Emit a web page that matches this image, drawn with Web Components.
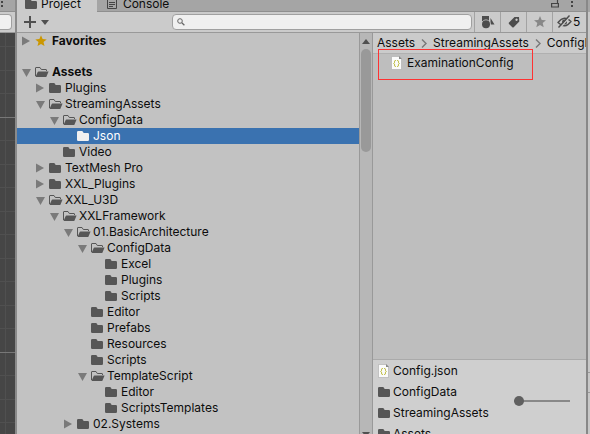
<!DOCTYPE html>
<html lang="en">
<head>
<meta charset="utf-8">
<title>Project</title>
<style>
html,body{margin:0;height:100%;overflow:hidden}
body{font:12px/16px Inter,"Liberation Sans",sans-serif;color:#0d0d0d;background:#c2c2c2}
</style>
</head>
<body>
<editor-window></editor-window>
<script>
const ICONS = {
  folder: '<svg width="14" height="14" viewBox="0 0 14 14"><path fill="#565656" d="M0 3.2Q0 2 1.2 2h3.6Q5.6 2 6 2.8L6.6 4h4.2Q12 4 12 5.2v5.6q0 1.2-1.2 1.2H1.2Q0 12 0 10.8z"/></svg>',
  selected: '<svg width="14" height="14" viewBox="0 0 14 14"><path fill="#f0f0f0" d="M0 3.2Q0 2 1.2 2h3.6Q5.6 2 6 2.8L6.6 4h4.2Q12 4 12 5.2v5.6q0 1.2-1.2 1.2H1.2Q0 12 0 10.8z"/></svg>',
  open: '<svg width="14" height="14" viewBox="0 0 14 14"><path fill="none" stroke="#565656" d="M.5 11V3q0-.5.5-.5h4L6.300 4.500H11q.5 0 .5.5v1"/><path fill="#565656" d="M3.500 6.500H13.600L11.500 11.500q-.2.500-.8.500H.5L2.700 7q.2-.5.8-.5z"/></svg>',
  star: '<svg width="14" height="14" viewBox="0 0 14 14"><path fill="#cb9700" d="M6 1.300l1.600 3.800 4.100.3-3.200 2.700 1 4L6 9.900l-3.500 2.200 1-4L.3 5.400l4.100-.3z"/></svg>',
  greystar: '<svg width="14" height="14" viewBox="0 0 14 14"><path fill="#888" d="M7 1l1.700 4 4.300.3-3.300 2.800 1 4.200L7 10l-3.700 2.300 1-4.200L1 5.300 5.300 5z"/></svg>',
  json: '<svg width="14" height="14" viewBox="0 0 14 14"><path fill="#fbfbfb" stroke="#aaa" stroke-width=".6" d="M.5.500h7.800l2.200 2.200v10.800H.5z"/><path fill="#888" d="M8 0v3h3z"/><path fill="none" stroke="#b5b424" d="M4.800 4.500q-1.300 0-1.300 1v1L2.800 7.500l.7.800v1q0 1.200 1.300 1.200M6.200 4.500q1.300 0 1.300 1v1l.7 1-.7.800v1q0 1.200-1.300 1.200"/></svg>',
  list: '<svg width="11" height="12" viewBox="0 0 11 12"><path fill="none" stroke="#444" d="M.5 1.500h9v9h-9zM2 4.500h6M2 6.500h6M2 8.500h4"/></svg>',
  plus: '<svg width="12" height="12" viewBox="0 0 12 12"><path stroke="#505050" stroke-width="2" d="M6 0v12M0 6h12"/></svg>',
  caret: '<svg width="8" height="5" viewBox="0 0 8 5"><path fill="#505050" d="M0 0h8L4 5z"/></svg>',
  up: '<svg width="8" height="5" viewBox="0 0 8 5"><path fill="#505050" d="M0 5h8L4 0z"/></svg>',
  right: '<svg width="8" height="10" viewBox="0 0 8 10"><path fill="#7a7a7a" d="M0 .500v9L8 5z"/></svg>',
  down: '<svg width="9" height="9" viewBox="0 0 9 9"><path fill="#7a7a7a" d="M0 1h9L4.500 9z"/></svg>',
  search: '<svg width="8" height="8" viewBox="0 0 8 8"><circle cx="3" cy="3" r="2.300" fill="none" stroke="#666"/><path stroke="#666" stroke-width="1.300" d="M4.800 4.800l2.600 2.400"/></svg>',
  shapes: '<svg width="14" height="14" viewBox="0 0 14 14"><path fill="#4d4d4d" d="M1 1h7v5H1zM9.500 3l4 6.500h-4z"/><circle cx="5" cy="9.200" r="4.600" fill="#cbcbcb"/><circle cx="5" cy="9.200" r="4" fill="#4d4d4d"/></svg>',
  tag: '<svg width="14" height="14" viewBox="0 0 14 14"><path fill="#4d4d4d" fill-rule="evenodd" d="M7.500 2L12 2l.3 4.500-5.600 5.800q-.7.600-1.400 0L2 9q-.6-.7 0-1.400zM9.500 3.500a1.200 1.200 0 1 0 .1 0z"/></svg>',
  eye: '<svg width="15" height="14" viewBox="0 0 15 14"><path fill="none" stroke="#4d4d4d" stroke-width="1.300" d="M1 7.500Q7.500-.5 14 6.500q-6 8-13 1z"/><circle cx="7.500" cy="7" r="2.500" fill="#4d4d4d"/><path stroke="#cbcbcb" stroke-width="1.500" d="M2.500 13.500l11-12.500"/><path stroke="#4d4d4d" stroke-width="1.400" d="M1.500 12.500l11-12"/></svg>',
  lock: '<svg width="8" height="9" viewBox="0 0 8 9"><path fill="none" stroke="#444" stroke-width="1.200" d="M.600 3.500h6.800v3.500H.6zM6.500 3.500V0"/></svg>',
  more: '<svg width="3" height="10" viewBox="0 0 3 10"><path fill="#444" d="M0 1h2v2H0zM0 5h2v2H0z"/></svg>',
  chevron: '<svg width="6" height="9" viewBox="0 0 6 9"><path fill="none" stroke="#777" stroke-width="1.400" d="M1 .5l4 4-4 4"/></svg>'
};
const base = `*{box-sizing:border-box}svg{display:block;flex:none}
button{font:inherit;color:inherit;background:none;border:0;padding:0;margin:0;display:flex;align-items:center;justify-content:center}
a{color:inherit;text-decoration:none}`;
function element(name, render) {
  customElements.define(name, class extends HTMLElement {
    constructor() { super(); this.attachShadow({mode: 'open'}); }
    connectedCallback() { this.shadowRoot.innerHTML = `<style>${base}</style>` + render(this); }
  });
}

element('scene-strip', () => `<style>
:host{display:flex;flex-direction:column;flex:none;width:17px;border-right:2px solid #8a8a8a;background:#cbcbcb}
.top{height:12px;display:flex;background:#a5a5a5;border-bottom:1px solid #8f8f8f;overflow:hidden;padding-left:1px}
.bar{height:21px;padding:2px 3px 2px 0;border-bottom:1px solid #999}
.field{height:16px;background:#f0f0f0;border:1px solid #a0a0a0;border-left:0;border-radius:0 4px 4px 0}
.grid{flex:1;background:
linear-gradient(#777,#777) 0 84px/100% 1px no-repeat,
linear-gradient(#777,#777) 0 319px/100% 1px no-repeat,
linear-gradient(#505050,#505050) 5px 0/1px 100% no-repeat,
repeating-linear-gradient(#0000 0 13px,#505050 13px 14px,#0000 14px 37px,#505050 37px 38px,#0000 38px 47px),#464646}
</style><div class="top">${ICONS.more}</div><div class="bar"><div class="field"></div></div><div class="grid"></div>`);

element('panel-tab', el => `<style>
:host{display:flex;height:12px;padding:0 10px;align-items:flex-end;border-bottom:1px solid #8f8f8f}
:host([active]){background:#cbcbcb;border-bottom-color:#cbcbcb;padding:0 16px 0 8px}
button{gap:5px;height:14px}
:host([active]) button{gap:2px}
</style><button>${ICONS[el.getAttribute('icon')]}<slot></slot></button>`);

element('tool-bar', () => `<style>
:host{display:flex;height:21px;background:#cbcbcb;border-bottom:1px solid #999;align-items:center}
.add{gap:5px;padding-left:7px}
label{flex:1;display:flex;align-items:center;height:16px;margin:0 2px 0 123px;padding-left:4px;background:#f0f0f0;border:1px solid #a0a0a0;border-radius:4px}
input{font:inherit;flex:1;min-width:0;border:0;background:none;padding:0 3px;height:14px;outline:0}
.tool{width:26px;height:20px;border-left:1px solid #a3a3a3}
.tool:last-child{width:34px;padding-left:4px;justify-content:flex-start;gap:1px}
</style><button class="add" aria-label="Create">${ICONS.plus}${ICONS.caret}</button>
<label>${ICONS.search}<input type="text" aria-label="Search"></label>
<button class="tool" aria-label="Search by type">${ICONS.shapes}</button><button class="tool" aria-label="Search by label">${ICONS.tag}</button>
<button class="tool" aria-label="Save search">${ICONS.greystar}</button><button class="tool" aria-label="Hidden packages">${ICONS.eye}<span>5</span></button>`);

element('tree-row', el => {
  const state = el.getAttribute('state');
  return `<style>
:host{display:flex;height:16px;align-items:center;padding-left:calc(5px + 14px*${el.getAttribute('level')});white-space:nowrap;flex:none}
:host([strong]){font-weight:700}
:host([icon=selected]){background:#3a72b0;color:#fff}
.arrow{width:13px;height:16px;justify-content:flex-start}
svg{margin-right:2px}.arrow svg{margin:0}
:host([strong]) svg{margin-right:3px}
</style>${state ? `<button class="arrow" aria-label="Toggle">${ICONS[state]}</button>` : '<span class="arrow"></span>'}${ICONS[el.getAttribute('icon') || (state === 'down' ? 'open' : 'folder')]}<slot></slot>`;
});

const rows = [[0,'Assets','down'],[1,'Plugins','right'],[1,'StreamingAssets','down'],[2,'ConfigData','down'],[3,'Json','','selected'],[2,'Video',''],[1,'TextMesh Pro','right'],[1,'XXL_Plugins','right'],[1,'XXL_U3D','down'],[2,'XXLFramework','down'],[3,'01.BasicArchitecture','down'],[4,'ConfigData','down'],[5,'Excel',''],[5,'Plugins',''],[5,'Scripts',''],[4,'Editor',''],[4,'Prefabs',''],[4,'Resources',''],[4,'Scripts',''],[4,'TemplateScript','down'],[5,'Editor',''],[5,'ScriptsTemplates',''],[3,'02.Systems','right']];
element('folder-tree', () => `<style>
:host{display:flex;flex-direction:column;flex:342;min-width:0;overflow:hidden;background:#c2c2c2}
.gap{height:15px;flex:none}
</style><tree-row level="0" state="right" icon="star" strong>Favorites</tree-row><div class="gap"></div>` +
rows.map(([level, text, state, icon]) => `<tree-row level="${level}" state="${state}"${icon ? ` icon="${icon}"` : ''}${level ? '' : ' strong'}>${text}</tree-row>`).join(''));

element('scroll-track', () => `<style>
:host{display:flex;flex-direction:column;align-items:center;flex:none;width:14px;background:#b7b7b7;border:solid #999;border-width:0 1px;overflow:hidden}
button{height:16px;flex:none}
button:last-child{height:2px;overflow:hidden;align-items:flex-start}
.track{flex:1;align-self:stretch;padding:0 1px}
.thumb{height:27%;border-radius:5px;background:#999}
</style><button aria-label="Scroll up">${ICONS.up}</button><div class="track"><div class="thumb"></div></div><button aria-label="Scroll down">${ICONS.caret}</button>`);

element('crumb-bar', () => `<style>
:host{display:flex;align-items:center;gap:6px;height:21px;flex:none;padding-left:4px;background:#cbcbcb;border-bottom:1px solid #b0b0b0;overflow:hidden;white-space:nowrap}
</style><a href="#a">Assets</a>${ICONS.chevron}<a href="#s">StreamingAssets</a>${ICONS.chevron}<a href="#c">ConfigData</a>`);

element('file-item', el => `<style>
:host{display:flex;align-items:center;gap:1px;height:21px;flex:none;white-space:nowrap}
:host([wide]){gap:2px;height:18px}
</style>${ICONS[el.getAttribute('icon')]}<slot></slot>`);

element('asset-pane', () => `<style>
:host{display:flex;flex-direction:column;flex:213;min-width:0;background:#bebebe;overflow:hidden}
.files{flex:1;position:relative;padding-left:18px}
.mark{position:absolute;left:5px;top:-5px;width:155px;height:31px;border:1px solid #ff3232}
.foot{height:75px;flex:none;background:#cfcfcf;border-top:1px solid #aaa;display:flex;overflow:hidden}
.names{flex:1;padding-left:5px}
input{appearance:none;width:56px;height:12px;margin:35px 16px 0 0;background:linear-gradient(#888,#888) 0 5px/100% 2px no-repeat}
input::-webkit-slider-thumb{appearance:none;width:10px;height:10px;border-radius:50%;background:#606060}
</style><crumb-bar></crumb-bar><div class="files"><file-item icon="json" wide>ExaminationConfig</file-item><div class="mark"></div></div>
<div class="foot"><div class="names"><file-item icon="json">Config.json</file-item><file-item icon="folder">ConfigData</file-item><file-item icon="folder">StreamingAssets</file-item><file-item icon="folder">Assets</file-item></div><input type="range" min="0" max="100" value="0" aria-label="Icon size"></div>`);

element('project-panel', () => `<style>
:host{display:flex;flex-direction:column;flex:1;min-width:0}
.tabs{display:flex;height:12px;background:#a5a5a5}
.fill{flex:1;display:flex;justify-content:flex-end;align-items:flex-start;gap:12px;padding-right:12px;border-bottom:1px solid #8f8f8f}
.main{display:flex;flex:1;min-height:0}
</style><div class="tabs"><panel-tab active icon="folder">Project</panel-tab><panel-tab icon="list">Console</panel-tab><div class="fill"><button aria-label="Lock">${ICONS.lock}</button><button aria-label="Menu">${ICONS.more}</button></div></div>
<tool-bar></tool-bar><div class="main"><folder-tree></folder-tree><scroll-track></scroll-track><asset-pane></asset-pane></div>`);

element('side-strip', () => `<style>
:host{display:flex;flex-direction:column;width:4px;flex:none;border-left:2px solid #888;background:#c8c8c8}
.top{height:12px;background:#a5a5a5}.mid{flex:1;border-bottom:1px solid #999}
.row{height:20px;border-bottom:1px solid #999}.end{height:41px}
</style><div class="top"></div><div class="mid"></div><div class="row"></div><div class="end"></div>`);

element('editor-window', () => `<style>:host{display:flex;height:100vh}</style><scene-strip></scene-strip><project-panel></project-panel><side-strip></side-strip>`);
</script>
</body>
</html>
